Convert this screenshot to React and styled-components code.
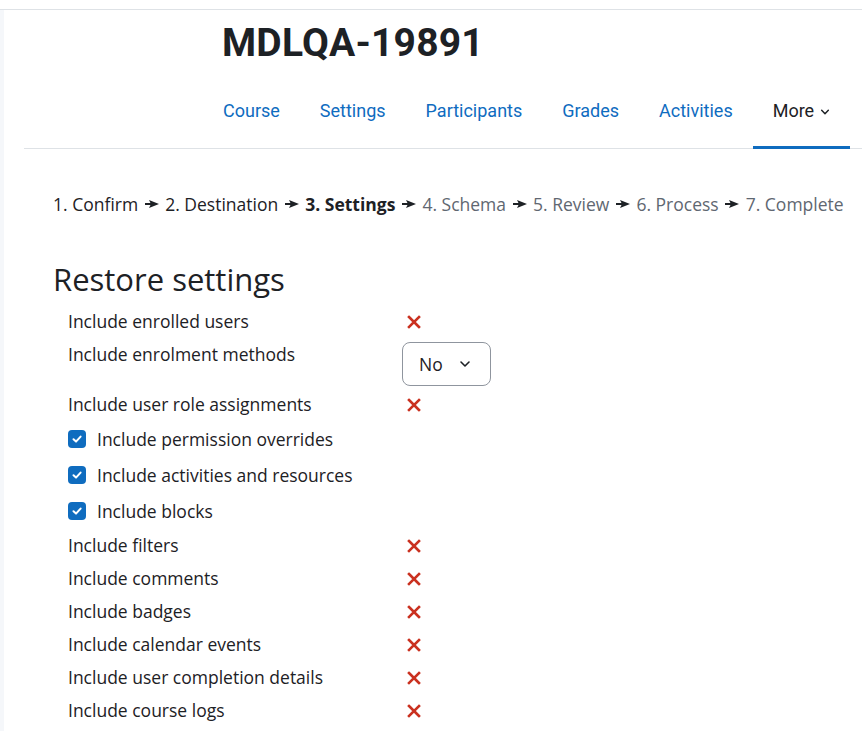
import React from "react";
import styled, { createGlobalStyle } from "styled-components";

const Global = createGlobalStyle`
  html, body { margin: 0; padding: 0; background: #fff; }
  body { font-family: "Open Sans", "Noto Sans", sans-serif; color: #1d2125; }
  * { box-sizing: border-box; }
`;

const Page = styled.div`
  padding-top: 9px;
  min-height: 731px;
`;

const Frame = styled.div`
  border-top: 1px solid #dee2e6;
  display: flex;
  min-height: 722px;
`;

const Drawer = styled.div`
  width: 4px;
  background: #f5f7fa;
  flex: none;
`;

const Main = styled.main`
  flex: 1;
  padding-left: 20px;
  overflow: hidden;
`;

const Title = styled.h1`
  margin: 0;
  padding: 8px 0 0 198px;
  font-family: Roboto, "Liberation Sans", sans-serif;
  font-weight: 700;
  font-size: 39px;
  line-height: 50px;
  letter-spacing: 0.2px;
  color: #1d2125;
`;

const Nav = styled.nav`
  margin-top: 30px;
  border-bottom: 1px solid #dee2e6;
  display: flex;
  padding-left: 179px;
`;

const Tab = styled.a`
  display: flex;
  align-items: flex-start;
  gap: 6px;
  padding: 0 20px;
  height: 51px;
  margin-bottom: -1px;
  font-family: Roboto, "Liberation Sans", sans-serif;
  font-size: 18px;
  line-height: 26px;
  color: ${(p) => (p.$active ? "#1d2125" : "#0f6cbf")};
  border-bottom: 3px solid ${(p) => (p.$active ? "#0f6cbf" : "transparent")};
  text-decoration: none;
  white-space: nowrap;

  svg {
    margin-top: 9px;
  }
`;

const Content = styled.div`
  padding-left: 29px;
`;

const Steps = styled.div`
  margin-top: 43px;
  font-size: 17.5px;
  line-height: 24px;
  white-space: nowrap;
  display: flex;
  align-items: center;
`;

const Step = styled.span`
  color: ${(p) => (p.$future ? "#5f6771" : "#1d2125")};
  font-weight: ${(p) => (p.$current ? 700 : 400)};
`;

const Arrow = styled.svg`
  margin: 0 6.5px;
  flex: none;
`;

const Heading = styled.h2`
  margin: 43px 0 0;
  font-size: 31px;
  font-weight: 400;
  line-height: 40px;
`;

const Form = styled.div`
  padding-left: 15px;
  margin-top: 6px;
`;

const Row = styled.div`
  display: grid;
  grid-template-columns: 334px auto;
  align-items: start;
  min-height: ${(p) => p.$h || 33}px;
  font-size: 17.5px;
  line-height: 25px;
  padding-top: 4px;
`;

const CheckRow = styled.label`
  display: flex;
  align-items: center;
  gap: 11px;
  height: 36px;
  font-size: 17.5px;
`;

const Box = styled.span`
  width: 18px;
  height: 18px;
  border-radius: 4px;
  background: #0f6cbf;
  display: inline-flex;
  align-items: center;
  justify-content: center;
  flex: none;
`;

const Cross = styled.span`
  padding-left: 5px;
  display: inline-flex;
  height: 25px;
  align-items: center;
`;

const Select = styled.div`
  width: 89px;
  height: 44px;
  border: 1px solid #8f959e;
  border-radius: 8px;
  display: flex;
  align-items: center;
  justify-content: space-between;
  padding: 0 19px 0 16px;
  font-size: 17.5px;
`;

const X = () => (
  <svg width="14" height="14" viewBox="0 0 14 14">
    <path d="M2 2 L12 12 M12 2 L2 12" stroke="#ca3120" strokeWidth="2.6" strokeLinecap="square" />
  </svg>
);

const Check = () => (
  <svg width="12" height="12" viewBox="0 0 12 12">
    <path d="M2.5 6.3 L5 8.6 L9.6 3.6" stroke="#fff" strokeWidth="2" fill="none" strokeLinecap="round" strokeLinejoin="round" />
  </svg>
);

const Chevron = ({ size = 12, w = 1.6 }) => (
  <svg width={size} height={size} viewBox="0 0 12 12">
    <path d="M2 4 L6 8 L10 4" stroke="#1d2125" strokeWidth={w} fill="none" strokeLinecap="round" strokeLinejoin="round" />
  </svg>
);

const Pointer = () => (
  <Arrow width="14" height="8" viewBox="0 0 14 8">
    <path d="M4 0 L14 4 L4 8 L5.5 5 H0 V3 H5.5 Z" fill="#1d2125" />
  </Arrow>
);

const steps = ["Confirm", "Destination", "Settings", "Schema", "Review", "Process", "Complete"];

const before = [
  { label: "Include enrolled users", x: true },
  { label: "Include enrolment methods", select: true },
  { label: "Include user role assignments", x: true },
];
const checks = ["Include permission overrides", "Include activities and resources", "Include blocks"];
const after = [
  "Include filters",
  "Include comments",
  "Include badges",
  "Include calendar events",
  "Include user completion details",
  "Include course logs",
];

export default function App() {
  return (
    <Page>
      <Global />
      <Frame>
        <Drawer />
        <Main>
          <Title>MDLQA-19891</Title>
          <Nav>
            <Tab>Course</Tab>
            <Tab>Settings</Tab>
            <Tab>Participants</Tab>
            <Tab>Grades</Tab>
            <Tab>Activities</Tab>
            <Tab $active>
              More <Chevron size={10} w={1.8} />
            </Tab>
          </Nav>
          <Content>
            <Steps>
              {steps.map((s, i) => (
                <React.Fragment key={s}>
                  {i > 0 && <Pointer />}
                  <Step $current={i === 2} $future={i > 2}>
                    {i + 1}. {s}
                  </Step>
                </React.Fragment>
              ))}
            </Steps>
            <Heading>Restore settings</Heading>
            <Form>
              {before.map((r) => (
                <Row key={r.label} $h={r.select ? 50 : 33}>
                  <span>{r.label}</span>
                  {r.select ? (
                    <Select>
                      No <Chevron />
                    </Select>
                  ) : (
                    <Cross>
                      <X />
                    </Cross>
                  )}
                </Row>
              ))}
              {checks.map((c) => (
                <CheckRow key={c}>
                  <Box>
                    <Check />
                  </Box>
                  {c}
                </CheckRow>
              ))}
              {after.map((l) => (
                <Row key={l}>
                  <span>{l}</span>
                  <Cross>
                    <X />
                  </Cross>
                </Row>
              ))}
            </Form>
          </Content>
        </Main>
      </Frame>
    </Page>
  );
}
